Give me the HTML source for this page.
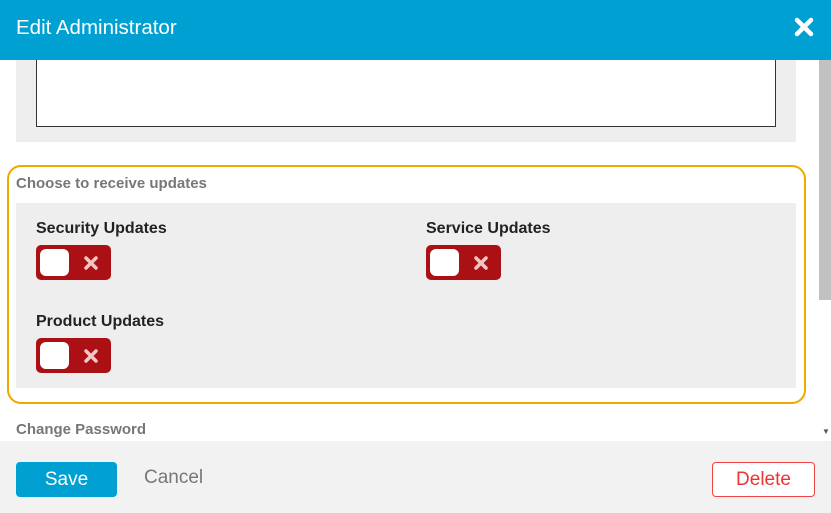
<!DOCTYPE html><html><head><style>
*{margin:0;padding:0;box-sizing:border-box}
body{width:831px;height:513px;overflow:hidden;font-family:"Liberation Sans",sans-serif;background:#fff;position:relative}
.a{position:absolute}
.hdr{left:0;top:0;width:831px;height:60px;background:#00a0d2;color:#fff;font-size:20.5px}
.tg{width:75px;height:35px;background:#ab1114;border-radius:5px}
.tg .k{position:absolute;left:4px;top:4px;width:29px;height:27px;background:#fff;border-radius:6px}
.tg svg{position:absolute;left:48px;top:11px}
.lb{font-size:16px;font-weight:bold;color:#222}
.sec{font-size:15px;font-weight:bold;color:#777}
</style></head><body>
<div class="a hdr"><span class="a" style="left:16px;top:16px">Edit Administrator</span>
<svg class="a" style="left:794px;top:17px" width="20" height="20" viewBox="0 0 20 20"><path d="M3 3L17 17M17 3L3 17" stroke="#fff" stroke-width="4.5" stroke-linecap="round"/></svg></div>
<div class="a" style="left:16px;top:60px;width:780px;height:82px;background:#eee"></div>
<div class="a" style="left:36px;top:60px;width:740px;height:67px;background:#fff;border:1px solid #333;border-top:none"></div>
<div class="a" style="left:818px;top:60px;width:13px;height:381px;background:#fff"></div>
<div class="a" style="left:819px;top:60px;width:12px;height:240px;background:#c1c1c1"></div>
<div class="a" style="left:822px;top:427px;font-size:8px;color:#555">▼</div>
<div class="a" style="left:7px;top:165px;width:799px;height:239px;border:2px solid #f0a800;border-radius:14px"></div>
<div class="a sec" style="left:16px;top:175px">Choose to receive updates</div>
<div class="a" style="left:16px;top:203px;width:780px;height:185px;background:#eee"></div>
<div class="a lb" style="left:36px;top:220px">Security Updates</div>
<div class="a lb" style="left:426px;top:220px">Service Updates</div>
<div class="a lb" style="left:36px;top:313px">Product Updates</div>
<div class="a tg" style="left:36px;top:245px"><div class="k"></div><svg width="14" height="14" viewBox="0 0 14 14"><path d="M2 2L12 12M12 2L2 12" stroke="#f3c6c6" stroke-width="3.5" stroke-linecap="round"/></svg></div>
<div class="a tg" style="left:426px;top:245px"><div class="k"></div><svg width="14" height="14" viewBox="0 0 14 14"><path d="M2 2L12 12M12 2L2 12" stroke="#f3c6c6" stroke-width="3.5" stroke-linecap="round"/></svg></div>
<div class="a tg" style="left:36px;top:338px"><div class="k"></div><svg width="14" height="14" viewBox="0 0 14 14"><path d="M2 2L12 12M12 2L2 12" stroke="#f3c6c6" stroke-width="3.5" stroke-linecap="round"/></svg></div>
<div class="a sec" style="left:16px;top:421px">Change Password</div>
<div class="a" style="left:0;top:441px;width:831px;height:72px;background:#f2f2f2"></div>
<div class="a" style="left:16px;top:462px;width:101px;height:35px;background:#00a0d2;border-radius:4px;color:#fff;font-size:19px;text-align:center;line-height:35px">Save</div>
<div class="a" style="left:144px;top:467px;font-size:19px;color:#777">Cancel</div>
<div class="a" style="left:712px;top:462px;width:103px;height:35px;border:1px solid #e44;background:#fff;border-radius:4px;color:#e33;font-size:19px;text-align:center;line-height:33px">Delete</div>
</body></html>
